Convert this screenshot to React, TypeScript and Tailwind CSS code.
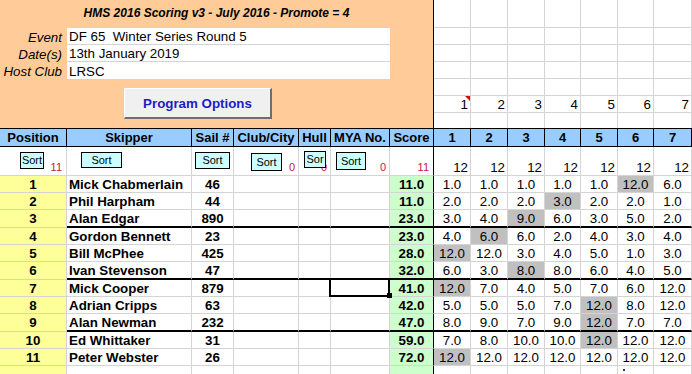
import React from "react";

type Row = { pos: number; name: string; sail: string; score: string; races: number[]; drop: number };

const rows: Row[] = [
  { pos: 1, name: "Mick Chabmerlain", sail: "46", score: "11.0", races: [1, 1, 1, 1, 1, 12, 6], drop: 5 },
  { pos: 2, name: "Phil Harpham", sail: "44", score: "11.0", races: [2, 2, 2, 3, 2, 2, 1], drop: 3 },
  { pos: 3, name: "Alan Edgar", sail: "890", score: "23.0", races: [3, 4, 9, 6, 3, 5, 2], drop: 2 },
  { pos: 4, name: "Gordon Bennett", sail: "23", score: "23.0", races: [4, 6, 6, 2, 4, 3, 4], drop: 1 },
  { pos: 5, name: "Bill McPhee", sail: "425", score: "28.0", races: [12, 12, 3, 4, 5, 1, 3], drop: 0 },
  { pos: 6, name: "Ivan Stevenson", sail: "47", score: "32.0", races: [6, 3, 8, 8, 6, 4, 5], drop: 2 },
  { pos: 7, name: "Mick Cooper", sail: "879", score: "41.0", races: [12, 7, 4, 5, 7, 6, 12], drop: 0 },
  { pos: 8, name: "Adrian Cripps", sail: "63", score: "42.0", races: [5, 5, 5, 7, 12, 8, 12], drop: 4 },
  { pos: 9, name: "Alan Newman", sail: "232", score: "47.0", races: [8, 9, 7, 9, 12, 7, 7], drop: 4 },
  { pos: 10, name: "Ed Whittaker", sail: "31", score: "59.0", races: [7, 8, 10, 10, 12, 12, 12], drop: 4 },
  { pos: 11, name: "Peter Webster", sail: "26", score: "72.0", races: [12, 12, 12, 12, 12, 12, 12], drop: 0 },
];

const GRID =
  "grid grid-cols-[67px_125px_42px_65px_32px_59px_44px_37px_37px_37px_36px_37px_36px_38px]";
const RGRID = "grid grid-cols-[37px_37px_37px_36px_37px_36px_38px]";
const GR = "border-r border-r-[#d4d4d4]";
const GB = "border-b border-b-[#d4d4d4]";
const RED = "text-[11px] leading-[13px] text-[#c8143c]";

function SortBtn({ className, label = "Sort", top = false }: { className: string; label?: string; top?: boolean }) {
  return (
    <div
      className={`absolute z-10 flex justify-center overflow-hidden border border-black bg-[#ccffff] text-[11px] leading-[13px] text-black ${
        top ? "items-start pt-[1px]" : "items-center"
      } ${className}`}
    >
      {label}
    </div>
  );
}

const headers = ["Position", "Skipper", "Sail #", "Club/City", "Hull", "MYA No.", "Score", "1", "2", "3", "4", "5", "6", "7"];

export default function App() {
  return (
    <div className="relative h-[374px] w-[692px] overflow-hidden bg-white font-['Liberation_Sans',Arial,sans-serif] text-[13.33px] leading-[15px] text-black">
      {/* Top section */}
      <div className="flex h-[129px] border-b border-b-black">
        <div className="flex w-[434px] flex-col border-r border-r-black bg-[#ffcc99]">
          <div className="h-[28px] pt-[6px] text-center text-[12px] font-bold italic leading-[14px]">
            HMS 2016 Scoring v3 - July 2016 - Promote = 4
          </div>
          {[
            ["Event", "DF 65  Winter Series Round 5"],
            ["Date(s)", "13th January 2019"],
            ["Host Club", "LRSC"],
          ].map(([l, v], i) => (
            <div key={l} className="flex h-[17px]">
              <div className="flex w-[67px] items-end justify-end pr-[5px] italic">{l}</div>
              <div className={`flex w-[323px] items-end whitespace-pre bg-white pl-[2px] ${i < 2 ? GB : ""}`}>{v}</div>
            </div>
          ))}
          <div className="ml-[124px] mt-[9px] flex h-[31px] w-[148px] items-center justify-center border-l border-t border-r-2 border-b-2 border-l-white border-t-white border-r-[#6e6e6e] border-b-[#6e6e6e] bg-[#f0f0f0] font-bold text-[#1c1cc9]">
            Program Options
          </div>
        </div>
        <div className={`${RGRID} w-[258px] grid-rows-[28px_17px_17px_17px_17px_17px_15px]`}>
          {Array.from({ length: 7 }).map((_, r) =>
            Array.from({ length: 7 }).map((__, c) => (
              <div
                key={`${r}-${c}`}
                className={`relative flex items-end justify-end pr-[2px] ${GR} ${r < 6 ? GB : ""}`}
              >
                {r === 5 ? c + 1 : null}
                {r === 5 && c === 0 ? (
                  <svg className="absolute right-0 top-0" width="5" height="5" viewBox="0 0 5 5">
                    <polygon points="0,0 5,0 5,5" fill="#e00000" />
                  </svg>
                ) : null}
              </div>
            ))
          )}
        </div>
      </div>

      {/* Header row */}
      <div className={GRID}>
        {headers.map((h) => (
          <div
            key={h}
            className="flex h-[18px] items-center justify-center border-b border-r border-b-black border-r-black bg-[#99ccff] text-[13px] font-bold"
          >
            {h}
          </div>
        ))}
      </div>

      {/* Sort row */}
      <div className={GRID}>
        <div className={`relative flex h-[29px] items-end justify-end pb-[1px] pr-[4px] ${GR} ${GB}`}>
          <SortBtn className="left-[20px] top-[5px] h-[17px] w-[24px]" />
          <span className={RED}>11</span>
        </div>
        <div className={`relative h-[29px] ${GR} ${GB}`}>
          <SortBtn className="left-[14px] top-[5px] h-[16px] w-[41px]" />
        </div>
        <div className={`relative h-[29px] ${GR} ${GB}`}>
          <SortBtn className="left-[3px] top-[5px] h-[17px] w-[35px]" />
        </div>
        <div className={`relative flex h-[29px] items-end justify-end pb-[1px] pr-[3px] ${GR} ${GB}`}>
          <SortBtn className="left-[17px] top-[6px] h-[18px] w-[31px]" />
          <span className={RED}>0</span>
        </div>
        <div className={`relative flex h-[29px] items-end justify-end pb-[1px] pr-[3px] ${GR} ${GB}`}>
          <span className={RED}>0</span>
          <SortBtn className="left-[5px] top-[4px] h-[17px] w-[22px]" label="Sor" top />
        </div>
        <div className={`relative flex h-[29px] items-end justify-end pb-[1px] pr-[3px] ${GR} ${GB}`}>
          <SortBtn className="left-[5px] top-[5px] h-[18px] w-[30px]" />
          <span className={RED}>0</span>
        </div>
        <div className={`flex h-[29px] items-end justify-end border-r border-r-black pb-[1px] pr-[4px] ${GB}`}>
          <span className={RED}>11</span>
        </div>
        {Array.from({ length: 7 }).map((_, c) => (
          <div key={c} className={`flex h-[29px] items-end justify-end pr-[2px] ${GR} ${GB}`}>
            12
          </div>
        ))}
      </div>

      {/* Data rows */}
      <div className={GRID}>
        {rows.map((r, i) => {
          const thick = i % 3 === 2;
          const h = thick ? "h-[18px]" : "h-[17px]";
          const bb = thick ? "border-b-2 border-b-black" : GB;
          return (
            <React.Fragment key={r.pos}>
              <div
                className={`flex ${h} items-end justify-center bg-[#ffff99] font-bold ${GR} ${GB} ${thick ? "pb-[1px]" : ""}`}
              >
                {r.pos}
              </div>
              <div className={`flex ${h} items-end whitespace-nowrap pl-[2px] font-bold ${GR} ${bb}`}>{r.name}</div>
              <div className={`flex ${h} items-end justify-center font-bold ${GR} ${bb}`}>{r.sail}</div>
              <div className={`${h} ${GR} ${bb}`} />
              <div className={`${h} ${GR} ${bb}`} />
              <div className={`relative ${h} ${GR} ${bb}`}>
                {i === 6 ? (
                  <>
                    <div className="absolute -left-[2px] -top-[2px] z-10 h-[19px] w-[61px] border-2 border-black" />
                    <div className="absolute left-[56px] top-[13px] z-20 h-[5px] w-[5px] bg-black" />
                  </>
                ) : null}
              </div>
              <div
                className={`flex ${h} items-end justify-center border-r border-r-black bg-[#ccffcc] font-bold ${bb}`}
              >
                {r.score}
              </div>
              {r.races.map((v, c) => (
                <div
                  key={c}
                  className={`flex ${h} items-end justify-center ${GR} ${bb} ${c === r.drop ? "bg-[#c0c0c0]" : ""}`}
                >
                  {v.toFixed(1)}
                </div>
              ))}
            </React.Fragment>
          );
        })}
        {/* partial empty row */}
        <div className={`h-[12px] bg-[#ffff99] ${GR}`} />
        <div className={`h-[12px] ${GR}`} />
        <div className={`h-[12px] ${GR}`} />
        <div className={`h-[12px] ${GR}`} />
        <div className={`h-[12px] ${GR}`} />
        <div className={`h-[12px] ${GR}`} />
        <div className="h-[12px] border-r border-r-black bg-[#ccffcc]" />
        {Array.from({ length: 7 }).map((_, c) => (
          <div key={c} className={`relative h-[12px] ${GR}`}>
            {c === 5 ? <div className="absolute left-[5px] top-[3px] h-[2px] w-[2px] bg-[#1f3a9c]" /> : null}
          </div>
        ))}
      </div>
    </div>
  );
}
